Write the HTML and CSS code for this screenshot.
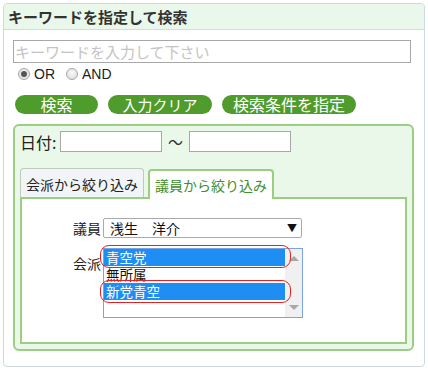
FILE: index.html
```html
<!DOCTYPE html>
<html lang="ja">
<head>
<meta charset="utf-8">
<link rel="stylesheet" href="styles.css">
</head>
<body>
<div class="panel">
  <div class="head">キーワードを指定して検索</div>
  <div class="body">
    <div class="kw">キーワードを入力して下さい</div>
    <div class="radios">
      <span class="radio checked"></span><span class="rlabel">OR</span>
      <span class="radio"></span><span class="rlabel">AND</span>
    </div>
    <div class="buttons">
      <span class="btn b1">検索</span>
      <span class="btn b2">入力クリア</span>
      <span class="btn b3">検索条件を指定</span>
    </div>
    <div class="fs">
      <div class="date">
        <span class="dlabel">日付:</span>
        <span class="dinput"></span>
        <span class="tilde">～</span>
        <span class="dinput"></span>
      </div>
      <div class="tabs">
        <span class="tab">会派から絞り込み</span>
        <span class="tab active">議員から絞り込み</span>
      </div>
      <div class="tabpanel">
        <div class="row">
          <span class="flabel">議員</span>
          <div class="select"><span>浅生　洋介</span><span class="arrow">▼</span></div>
        </div>
        <div class="row row2">
          <span class="flabel lab2">会派</span>
          <div class="listbox">
            <div class="opts">
              <div class="opt sel">青空党</div>
              <div class="opt">無所属</div>
              <div class="opt sel">新党青空</div>
            </div>
            <div class="sbar"><span class="up"></span><span class="down"></span></div>
            <span class="ring r1"></span>
            <span class="ring r2"></span>
          </div>
        </div>
      </div>
    </div>
  </div>
</div>
</body>
</html>
```
FILE: styles.css
```css
body {
  margin: 0;
  padding: 3px;
  font-family: "Liberation Sans", "Noto Sans CJK JP", sans-serif;
  color: #222;
  background: #fff;
}
.panel {
  width: 420px;
  height: 362px;
  border: 1px solid #cfd8dd;
  border-radius: 4px;
  overflow: hidden;
}
.head {
  height: 25px;
  background: #e9f8ea;
  border-bottom: 1px solid #d3dde1;
  font-family: "Noto Sans CJK JP", sans-serif;
  font-size: 15px;
  font-weight: bold;
  color: #333;
  line-height: 25px;
  padding-left: 4px;
}
.body {
  padding: 10px 0 0 9px;
}
.kw {
  width: 398px;
  height: 23px;
  box-sizing: border-box;
  border: 1px solid #a8a8a8;
  font-family: "Noto Sans CJK JP", sans-serif;
  font-size: 15px;
  color: #c4c4c4;
  line-height: 21px;
  padding-left: 1px;
  white-space: nowrap;
}
.radios {
  height: 20px;
  display: flex;
  align-items: center;
  padding-left: 5px;
  margin-top: 1px;
  font-size: 14px;
}
.radio {
  width: 12px;
  height: 12px;
  box-sizing: border-box;
  border: 1px solid #a6a6a6;
  border-radius: 50%;
  background: radial-gradient(circle at 50% 40%, #fafafa, #d8d8d8);
  display: flex;
  align-items: center;
  justify-content: center;
  margin-right: 4px;
}
.radio.checked::after {
  content: "";
  width: 6px;
  height: 6px;
  border-radius: 50%;
  background: #555;
}
.rlabel {
  margin-right: 11px;
}
.buttons {
  display: flex;
  gap: 10px;
  margin-top: 11px;
  padding-left: 2px;
}
.btn {
  height: 19px;
  border-radius: 10px;
  background: #4f9c2d;
  color: #fff;
  font-family: "Noto Sans CJK JP", sans-serif;
  font-size: 15px;
  line-height: 19px;
  display: flex;
  justify-content: center;
}
.b1 { width: 83px; font-size: 16px; }
.b2 { width: 104px; }
.b3 { width: 134px; font-size: 16px; }
.fs {
  margin-top: 10px;
  width: 401px;
  height: 227px;
  box-sizing: border-box;
  border: 2px solid #9bcd83;
  border-radius: 6px;
  background: #e9f8e9;
  padding: 5px 0 0 5px;
}
.date {
  height: 21px;
  display: flex;
  align-items: center;
  font-family: "Noto Sans CJK JP", sans-serif;
  font-size: 16px;
}
.dlabel {
  width: 40px;
  color: #222;
}
.dinput {
  width: 102px;
  height: 21px;
  box-sizing: border-box;
  border: 1px solid #a8a8a8;
  background: #fff;
}
.tilde {
  width: 27px;
  text-align: center;
  font-size: 15px;
  color: #333;
}
.tabs {
  margin-top: 16px;
  display: flex;
  align-items: flex-end;
  gap: 4px;
  height: 29px;
  position: relative;
  z-index: 1;
}
.tab {
  height: 29px;
  box-sizing: border-box;
  border: 1px solid #bccbbc;
  border-bottom: none;
  border-radius: 4px 4px 0 0;
  background: #f2f5f8;
  font-family: "Noto Sans CJK JP", sans-serif;
  font-size: 14px;
  line-height: 30px;
  padding: 0;
  text-align: center;
  white-space: nowrap;
  color: #222;
  width: 124px;
}
.tab.active {
  width: 126px;
  height: 30px;
  margin-bottom: -2px;
  border: 2px solid #9bcd83;
  border-bottom: none;
  background: #fff;
  color: #3f8e2c;
  line-height: 28px;
}
.tabpanel {
  width: 387px;
  height: 147px;
  box-sizing: border-box;
  border: 2px solid #9bcd83;
  background: #fff;
  padding: 19px 0 0 51px;
  font-family: "Noto Sans CJK JP", sans-serif;
  font-size: 14px;
}
.row {
  display: flex;
  align-items: center;
}
.row2 {
  align-items: flex-start;
  margin-top: 10px;
}
.flabel {
  width: 30px;
  font-size: 14px;
  line-height: 20px;
  color: #222;
}
.lab2 {
  margin-top: 5px;
}
.select {
  width: 199px;
  height: 20px;
  box-sizing: border-box;
  border: 1px solid #aaa;
  border-radius: 2px;
  display: flex;
  justify-content: space-between;
  align-items: center;
  padding: 0 4px 0 6px;
  line-height: 18px;
  color: #111;
}
.arrow {
  font-size: 10px;
  color: #111;
}
.listbox {
  position: relative;
  width: 200px;
  height: 70px;
  box-sizing: border-box;
  border: 1px solid #7ba2e2;
  display: flex;
}
.opts {
  flex: 1;
}
.opt {
  height: 17px;
  line-height: 17px;
  font-size: 13.5px;
  padding-left: 2px;
  color: #111;
}
.opt.sel {
  background: #1e8ef4;
  color: #fff;
}
.sbar {
  width: 17px;
  background: #f0f0f0;
  position: relative;
}
.up, .down {
  position: absolute;
  left: 4px;
  width: 0;
  height: 0;
  border-left: 5px solid transparent;
  border-right: 5px solid transparent;
}
.up {
  top: 7px;
  border-bottom: 5px solid #a8a8a8;
}
.down {
  bottom: 7px;
  border-top: 5px solid #a8a8a8;
}
.ring {
  position: absolute;
  left: -4px;
  width: 191px;
  height: 23px;
  box-sizing: border-box;
  border: 1.5px solid #e32222;
  border-radius: 9px;
}
.r1 { top: -4px; }
.r2 { top: 31px; }
```
